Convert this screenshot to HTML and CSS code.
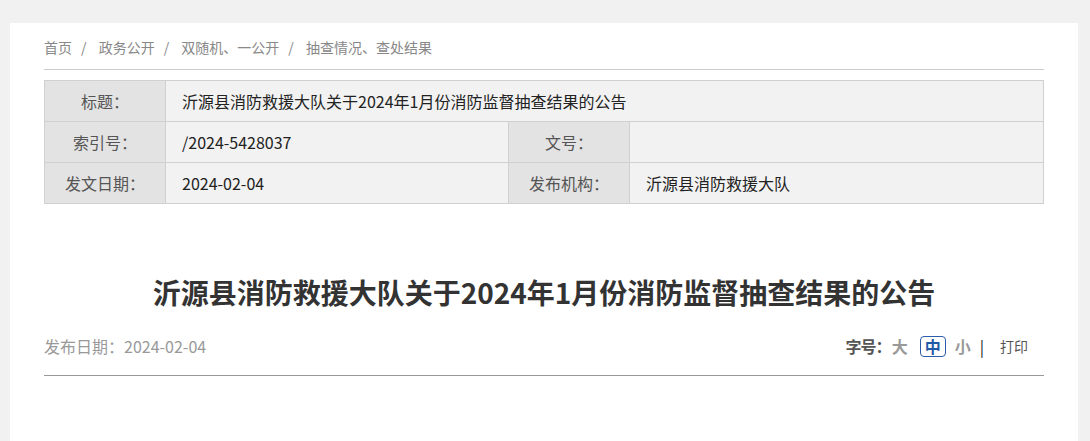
FILE: index.html
```html
<!DOCTYPE html>
<html lang="zh-CN">
<head>
  <meta charset="UTF-8">
  <title>沂源县消防救援大队关于2024年1月份消防监督抽查结果的公告</title>
  <link rel="stylesheet" href="styles.css">
</head>
<body>
  <div class="page">
    <div class="crumbs">
      <a href="#">首页</a><span class="sep">/</span>
      <a href="#">政务公开</a><span class="sep">/</span>
      <a href="#">双随机、一公开</a><span class="sep">/</span>
      <a href="#">抽查情况、查处结果</a>
    </div>

    <table class="info">
      <tr>
        <th>标题：</th>
        <td colspan="3">沂源县消防救援大队关于2024年1月份消防监督抽查结果的公告</td>
      </tr>
      <tr>
        <th>索引号：</th>
        <td class="w2">/2024-5428037</td>
        <th>文号：</th>
        <td></td>
      </tr>
      <tr>
        <th>发文日期：</th>
        <td class="w2">2024-02-04</td>
        <th>发布机构：</th>
        <td>沂源县消防救援大队</td>
      </tr>
    </table>

    <h1 class="title">沂源县消防救援大队关于2024年1月份消防监督抽查结果的公告</h1>

    <div class="meta">
      <span class="date">发布日期：2024-02-04</span>
      <div class="tools">
        <span class="lbl">字号：</span>
        <a href="#" class="size">大</a>
        <a href="#" class="size on">中</a>
        <a href="#" class="size">小</a>
        <span class="bar">|</span>
        <a href="#" class="print">打印</a>
      </div>
    </div>
  </div>
</body>
</html>
```

FILE: styles.css
```css
body { margin: 0; background: #f1f1f1; font-family: "Noto Sans CJK SC", "Noto Sans", sans-serif; color: #333; }
a { text-decoration: none; }
.page { margin: 23px 12px 0 10px; background: #fff; padding: 14px 34px 65px; }

.crumbs { font-size: 14px; line-height: 20px; color: #888; padding-bottom: 12px; border-bottom: 1px solid #ccc; }
.crumbs a { color: #888; }
.crumbs .sep { margin: 0 9px; }

.info { width: 1000px; margin-top: 10px; border-collapse: collapse; font-size: 16px; }
.info th, .info td { border: 1px solid #d0d0d0; height: 40px; padding: 0; }
.info th { width: 120px; background: #e3e3e3; color: #555; font-weight: normal; text-align: center; }
.info td { background: #f2f2f2; color: #222; padding-left: 16px; text-align: left; }
.info td.w2 { width: 326px; }

.title { margin: 68px 0 0; font-size: 28px; line-height: 40px; font-weight: bold; color: #333; text-align: center; }

.meta { display: flex; justify-content: space-between; align-items: center; margin-top: 22px; padding-bottom: 17px; border-bottom: 1px solid #999; line-height: 24px; }
.date { font-size: 16px; color: #999; }
.tools { display: flex; align-items: center; font-size: 16px; font-weight: bold; margin-right: 16px; }
.tools .lbl { color: #555; letter-spacing: -1px; }
.tools .size { color: #999; padding: 0 1px; margin-right: 6px; }
.tools .size.on { color: #1f5aa6; border: 1px solid #2a5caa; border-radius: 4px; line-height: 19px; padding: 0 4px; margin: 0 8px 0 5px; }
.tools .bar { color: #222; font-weight: normal; margin-left: 2px; }
.tools .print { color: #555; font-size: 14px; font-weight: normal; margin-left: 16px; }
```
